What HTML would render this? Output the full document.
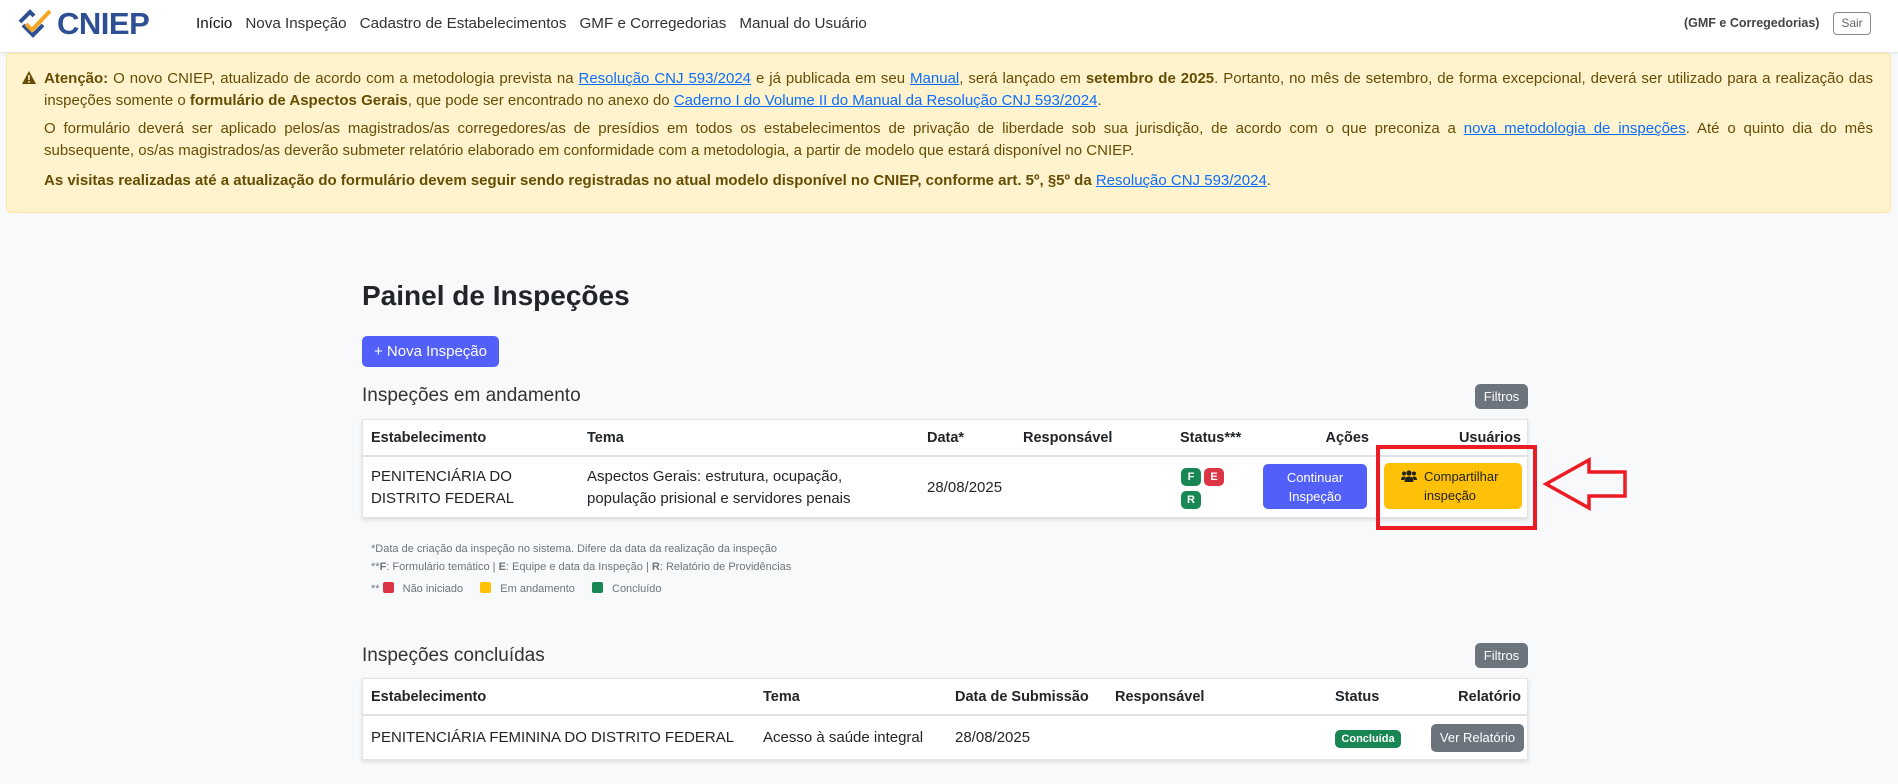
<!DOCTYPE html>
<html><head><meta charset="utf-8">
<style>
*{box-sizing:border-box;margin:0;padding:0}
body{width:1898px;height:784px;background:#f8f9fa;font-family:"Liberation Sans",Arial,sans-serif;color:#212529;position:relative;overflow:hidden}
.nav{position:absolute;left:0;top:0;width:1898px;height:53px;background:#fff;border-bottom:1px solid #e5e5e5;box-shadow:0 1px 3px rgba(0,0,0,.06)}
.logo{position:absolute;left:17px;top:8px}
.logotext{position:absolute;left:57px;top:6px;font-size:31px;font-weight:bold;color:#2d4f93;letter-spacing:-0.5px}
.links{position:absolute;left:196px;top:15px;font-size:15.2px;color:#333}
.links span{margin-right:13px}
.user{position:absolute;left:1684px;top:16px;font-size:12.5px;font-weight:bold;color:#444}
.sair{position:absolute;left:1833px;top:12px;width:38px;height:23px;border:1px solid #888;border-radius:4px;font-size:12px;color:#666;text-align:center;line-height:21px}
.alert{position:absolute;left:6px;top:53px;width:1885px;height:160px;background:#fff3cd;border:1px solid #ffe69c;border-radius:5px;color:#664d03;font-size:15px}
.alert .l{position:absolute;left:37px;width:1829px;white-space:nowrap}
.alert .j{text-align:justify;text-align-last:justify;white-space:normal}
.alert a{color:#0d6efd;text-decoration:underline}
.tri{position:absolute;left:15px;top:17px}
h1{position:absolute;left:362px;top:280px;font-size:28px;font-weight:bold;color:#212529}
.btn{position:absolute;border-radius:5px;color:#fff;text-align:center}
.sub{position:absolute;left:362px;font-size:19px;color:#333}
.card{position:absolute;left:362px;width:1166px;background:#fff;border:1px solid #e3e3e3;box-shadow:0 2px 4px rgba(0,0,0,.12)}
.th{position:absolute;font-weight:bold;font-size:14.5px;color:#212529}
.td{position:absolute;font-size:15px;color:#212529;line-height:22px}
.hline{position:absolute;left:0;width:100%;height:2px;background:#dee2e6}
.badge{position:absolute;border-radius:5px;color:#fff;font-weight:bold;font-size:11px;text-align:center}
.foot{position:absolute;left:371px;font-size:11px;color:#6c757d}
.sq{display:inline-block;width:11px;height:11px;border-radius:2px;vertical-align:-1px;margin:0 6px 0 3px}
</style></head><body>
<div class="nav">
 <svg class="logo" width="36" height="32" viewBox="0 0 36 32">
  <path d="M3 14 L13 4 L17 8" stroke="#2d4f93" stroke-width="4" fill="none"/>
  <path d="M6 17 L16 27 L26 17" stroke="#2d4f93" stroke-width="4" fill="none"/>
  <path d="M9 16 L15 22 L33 3" stroke="#f5a623" stroke-width="4" fill="none"/>
 </svg>
 <div class="logotext">CNIEP</div>
 <div class="links"><span style="color:#111">Início</span><span>Nova Inspeção</span><span>Cadastro de Estabelecimentos</span><span>GMF e Corregedorias</span><span>Manual do Usuário</span></div>
 <div class="user">(GMF e Corregedorias)</div>
 <div class="sair">Sair</div>
</div>
<div class="alert">
 <svg class="tri" width="14" height="13" viewBox="0 0 14 13"><path d="M7 0 L14 13 L0 13Z" fill="#664d03"/><rect x="6.2" y="4" width="1.6" height="5" fill="#fff3cd"/><rect x="6.2" y="10" width="1.6" height="1.6" fill="#fff3cd"/></svg>
 <div class="l j" style="top:16px"><b>Atenção:</b> O novo CNIEP, atualizado de acordo com a metodologia prevista na <a>Resolução CNJ 593/2024</a> e já publicada em seu <a>Manual</a>, será lançado em <b>setembro de 2025</b>. Portanto, no mês de setembro, de forma excepcional, deverá ser utilizado para a realização das</div>
 <div class="l" style="top:38px">inspeções somente o <b>formulário de Aspectos Gerais</b>, que pode ser encontrado no anexo do <a>Caderno I do Volume II do Manual da Resolução CNJ 593/2024</a>.</div>
 <div class="l j" style="top:66px">O formulário deverá ser aplicado pelos/as magistrados/as corregedores/as de presídios em todos os estabelecimentos de privação de liberdade sob sua jurisdição, de acordo com o que preconiza a <a>nova metodologia de inspeções</a>. Até o quinto dia do mês</div>
 <div class="l" style="top:88px">subsequente, os/as magistrados/as deverão submeter relatório elaborado em conformidade com a metodologia, a partir de modelo que estará disponível no CNIEP.</div>
 <div class="l" style="top:118px"><b>As visitas realizadas até a atualização do formulário devem seguir sendo registradas no atual modelo disponível no CNIEP, conforme art. 5º, §5º da</b> <a>Resolução CNJ 593/2024</a>.</div>
</div>

<h1>Painel de Inspeções</h1>
<div class="btn" style="left:362px;top:336px;width:137px;height:31px;background:#525ff8;font-size:15px;line-height:31px">+ Nova Inspeção</div>
<div class="sub" style="top:385px">Inspeções em andamento</div>
<div class="btn" style="left:1475px;top:384px;width:53px;height:25px;background:#6c757d;font-size:13px;line-height:25px">Filtros</div>

<div class="card" style="top:419px;height:99px">
 <div class="th" style="left:8px;top:10px">Estabelecimento</div>
 <div class="th" style="left:224px;top:10px">Tema</div>
 <div class="th" style="left:564px;top:10px">Data*</div>
 <div class="th" style="left:660px;top:10px">Responsável</div>
 <div class="th" style="left:817px;top:10px">Status***</div>
 <div class="th" style="right:158px;top:10px">Ações</div>
 <div class="th" style="right:6px;top:10px">Usuários</div>
 <div class="hline" style="top:35px"></div>
 <div class="td" style="left:8px;top:46px">PENITENCIÁRIA DO<br>DISTRITO FEDERAL</div>
 <div class="td" style="left:224px;top:46px">Aspectos Gerais: estrutura, ocupação,<br>população prisional e servidores penais</div>
 <div class="td" style="left:564px;top:57px">28/08/2025</div>
 <div class="badge" style="left:818px;top:48px;width:20px;height:18px;line-height:18px;background:#198754">F</div>
 <div class="badge" style="left:841px;top:48px;width:20px;height:18px;line-height:18px;background:#dc3545">E</div>
 <div class="badge" style="left:818px;top:71px;width:20px;height:18px;line-height:18px;background:#198754">R</div>
 <div class="btn" style="left:900px;top:44px;width:104px;height:45px;background:#525ff8;font-size:13px;line-height:19px;padding-top:4px">Continuar<br>Inspeção</div>
 <div class="btn" style="left:1021px;top:43px;width:138px;height:46px;background:#ffc107;color:#222;font-size:13px;line-height:19px;padding-top:4px;text-align:left;padding-left:40px">
  <svg style="position:absolute;left:17px;top:7px" width="16" height="12" viewBox="0 0 16 12"><circle cx="8" cy="3" r="2.6" fill="#222"/><circle cx="3" cy="3.5" r="2" fill="#222"/><circle cx="13" cy="3.5" r="2" fill="#222"/><path d="M3.5 12 Q3.5 6.5 8 6.5 Q12.5 6.5 12.5 12Z" fill="#222"/><path d="M0 10 Q0 6.5 3 6.5 Q4.5 6.5 4.8 7.5 L3 10Z" fill="#222"/><path d="M16 10 Q16 6.5 13 6.5 Q11.5 6.5 11.2 7.5 L13 10Z" fill="#222"/></svg>
  Compartilhar<br>inspeção</div>
</div>
<div style="position:absolute;left:1376px;top:445px;width:161px;height:85px;border:4px solid #ed1c24"></div>
<svg style="position:absolute;left:1542px;top:455px" width="90" height="60" viewBox="0 0 90 60">
 <path d="M4 29 L47 5 L47 17 L83 17 L83 41 L47 41 L47 53 Z" fill="none" stroke="#ed1c24" stroke-width="3.5" stroke-linejoin="miter"/>
</svg>

<div class="foot" style="top:543px">*Data de criação da inspeção no sistema. Difere da data da realização da inspeção</div>
<div class="foot" style="top:561px">**<b>F</b>: Formulário temático | <b>E</b>: Equipe e data da Inspeção | <b>R</b>: Relatório de Providências</div>
<div class="foot" style="top:582px">**<span class="sq" style="background:#dc3545"></span> Não iniciado <span class="sq" style="background:#ffc107;margin-left:14px"></span> Em andamento <span class="sq" style="background:#198754;margin-left:14px"></span> Concluído</div>

<div class="sub" style="top:645px">Inspeções concluídas</div>
<div class="btn" style="left:1475px;top:643px;width:53px;height:25px;background:#6c757d;font-size:13px;line-height:25px">Filtros</div>
<div class="card" style="top:678px;height:82px">
 <div class="th" style="left:8px;top:10px">Estabelecimento</div>
 <div class="th" style="left:400px;top:10px">Tema</div>
 <div class="th" style="left:592px;top:10px">Data de Submissão</div>
 <div class="th" style="left:752px;top:10px">Responsável</div>
 <div class="th" style="left:972px;top:10px">Status</div>
 <div class="th" style="right:6px;top:10px">Relatório</div>
 <div class="hline" style="top:35px"></div>
 <div class="td" style="left:8px;top:48px">PENITENCIÁRIA FEMININA DO DISTRITO FEDERAL</div>
 <div class="td" style="left:400px;top:48px">Acesso à saúde integral</div>
 <div class="td" style="left:592px;top:48px">28/08/2025</div>
 <div class="badge" style="left:972px;top:51px;width:66px;height:18px;line-height:18px;background:#198754">Concluída</div>
 <div class="btn" style="left:1068px;top:45px;width:93px;height:28px;background:#6c757d;font-size:13px;line-height:28px">Ver Relatório</div>
</div>
</body></html>
